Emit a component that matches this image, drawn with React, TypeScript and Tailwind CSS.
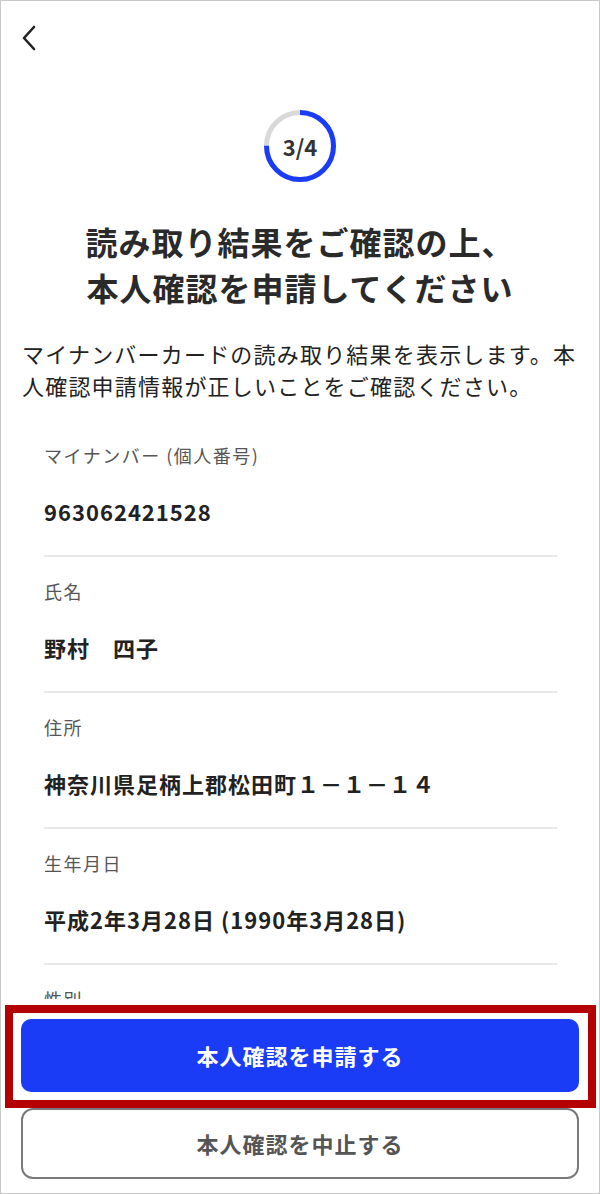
import React from "react";

const rows = [
  { label: "マイナンバー (個人番号)", value: "963062421528" },
  { label: "氏名", value: "野村　四子" },
  { label: "住所", value: "神奈川県足柄上郡松田町１－１－１４" },
  { label: "生年月日", value: "平成2年3月28日 (1990年3月28日)" },
  { label: "性別", value: "女" },
];

export default function App() {
  const r = 33.5;
  const c = 2 * Math.PI * r;
  return (
    <div
      className="w-[600px] h-[1194px] border border-[#c8c8c8] bg-white flex flex-col overflow-hidden"
      style={{ fontFamily: '"Noto Sans CJK JP", "Noto Sans", sans-serif' }}
    >
      <main className="flex-1 overflow-hidden flex flex-col">
        <div className="h-[109px] shrink-0 pt-[24px] pl-[20px]">
          <svg width="16" height="26" viewBox="0 0 16 26" fill="none">
            <path d="M13 2 L3 13 L13 24" stroke="#222" strokeWidth="2.6" strokeLinecap="round" strokeLinejoin="round" />
          </svg>
        </div>
        <div className="flex justify-center shrink-0">
          <div className="relative w-[72px] h-[72px]">
            <svg width="72" height="72" viewBox="0 0 72 72">
              <circle cx="36" cy="36" r={r} fill="none" stroke="#d9d9d9" strokeWidth="5" />
              <circle
                cx="36"
                cy="36"
                r={r}
                fill="none"
                stroke="#1b3cf6"
                strokeWidth="5"
                strokeDasharray={`${c * 0.75} ${c}`}
                transform="rotate(-90 36 36)"
              />
            </svg>
            <div className="absolute inset-0 flex items-center justify-center text-[22px] font-semibold text-[#333] leading-none">
              3/4
            </div>
          </div>
        </div>
        <h1 className="mt-[36px] text-center text-[32px] leading-[46px] font-bold text-[#2a2a2a] tracking-[1px] shrink-0">
          読み取り結果をご確認の上、
          <br />
          本人確認を申請してください
        </h1>
        <p className="mt-[27px] px-[21px] text-[22px] leading-[32px] tracking-[1.2px] text-[#222] shrink-0 whitespace-nowrap">
          マイナンバーカードの読み取り結果を表示します。本
          <br />
          人確認申請情報が正しいことをご確認ください。
        </p>
        <div className="mt-[20px] pl-[43px] pr-[42px] shrink-0">
          {rows.map((row) => (
            <div key={row.label} className="pt-[20px] pb-[30px] border-b-2 border-[#e8e8e8]">
              <div className="text-[18px] leading-[28px] tracking-[1.5px] text-[#555]">{row.label}</div>
              <div className="mt-[28px] text-[22px] leading-[28px] tracking-[1px] font-bold text-[#222]">
                {row.value}
              </div>
            </div>
          ))}
        </div>
      </main>
      <footer className="h-[194px] shrink-0 bg-white px-[20px] pt-[20px] pb-[14px] flex flex-col gap-[16px]">
        <div className="relative">
          <button className="w-full h-[73px] rounded-[10px] bg-[#1b3cf6] text-white text-[22px] font-bold tracking-[1px]">
            本人確認を申請する
          </button>
          <div className="absolute left-[-16px] right-[-17px] top-[-14px] bottom-[-16px] border-[8px] border-[#b40000] pointer-events-none" />
        </div>
        <button className="w-full h-[71px] rounded-[12px] border-2 border-[#7a7a7a] bg-white text-[#555] text-[22px] font-bold tracking-[1px]">
          本人確認を中止する
        </button>
      </footer>
    </div>
  );
}
